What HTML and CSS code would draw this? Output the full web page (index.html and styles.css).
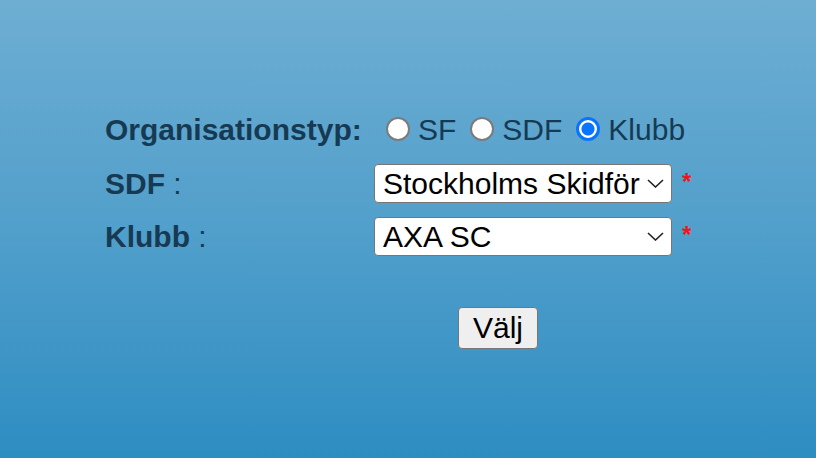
FILE: index.html
```html
<!DOCTYPE html>
<html lang="sv">
<head>
<meta charset="utf-8">
<title>Välj organisation</title>
<link rel="stylesheet" href="styles.css">
</head>
<body>
<form class="page">
  <div class="form-grid">
    <div class="label row-org"><b>Organisationstyp:</b></div>
    <div class="radios">
      <label class="opt"><input type="radio" name="typ" class="radio"><span>SF</span></label>
      <label class="opt"><input type="radio" name="typ" class="radio"><span>SDF</span></label>
      <label class="opt"><input type="radio" name="typ" class="radio" checked><span>Klubb</span></label>
    </div>

    <div class="label"><b>SDF</b> :</div>
    <div class="field">
      <div class="select-wrap">
        <select class="select"><option>Stockholms Skidförbund</option></select>
        <svg class="chev" width="17" height="9" viewBox="0 0 17 9"><path d="M1 1 L8.5 8 L16 1" fill="none" stroke="#222" stroke-width="1.6"/></svg>
      </div>
      <span class="req">*</span>
    </div>

    <div class="label"><b>Klubb</b> :</div>
    <div class="field">
      <div class="select-wrap">
        <select class="select"><option>AXA SC</option></select>
        <svg class="chev" width="17" height="9" viewBox="0 0 17 9"><path d="M1 1 L8.5 8 L16 1" fill="none" stroke="#222" stroke-width="1.6"/></svg>
      </div>
      <span class="req">*</span>
    </div>
  </div>
  <div class="actions">
    <button type="button" class="btn">Välj</button>
  </div>
</form>
</body>
</html>
```

FILE: styles.css
```css
html, body {
  margin: 0;
  height: 100%;
}
body {
  background: linear-gradient(to bottom, #6eaed3 0%, #519fcb 50%, #2e8dc2 100%);
  font-family: "Liberation Sans", Arial, sans-serif;
  color: #173a53;
  overflow: hidden;
}
.page {
  padding: 110px 0 0 105px;
}
.form-grid {
  display: grid;
  grid-template-columns: 269px auto;
  grid-template-rows: 40px 39px 39px;
  row-gap: 14px;
  align-items: center;
}
.label {
  font-size: 30px;
  line-height: 34px;
  white-space: nowrap;
}
.radios {
  display: flex;
  align-items: center;
  gap: 14px;
  padding-left: 12px;
  font-size: 30px;
}
.opt {
  display: flex;
  align-items: center;
  gap: 8px;
  line-height: 34px;
}
.radio {
  appearance: none;
  -webkit-appearance: none;
  margin: 0;
  width: 24px;
  height: 24px;
  border-radius: 50%;
  border: 2px solid #7b7b7b;
  background: #fff;
  box-sizing: border-box;
  position: relative;
  top: -1px;
}
.radio:checked {
  border: 3.5px solid #0a74fe;
  background: radial-gradient(circle, #0a74fe 0 6px, #fff 7px);
}
.field {
  display: flex;
  align-items: flex-start;
}
.select-wrap {
  position: relative;
  width: 298px;
  height: 39px;
}
.select {
  appearance: none;
  -webkit-appearance: none;
  width: 298px;
  height: 39px;
  margin: 0;
  box-sizing: border-box;
  border: 1.5px solid #767676;
  border-radius: 4px;
  background: #fff;
  color: #000;
  font-family: "Liberation Sans", Arial, sans-serif;
  font-size: 30px;
  padding: 0 31px 0 8px;
  line-height: 36px;
  text-overflow: clip;
  outline: none;
}
.chev {
  position: absolute;
  right: 8px;
  top: 15px;
  pointer-events: none;
}
.req {
  color: #f2141b;
  font-weight: bold;
  font-size: 24px;
  line-height: 24px;
  margin-left: 10px;
  margin-top: 6px;
}
.actions {
  padding: 51px 0 0 353px;
}
.btn {
  width: 80px;
  height: 42px;
  box-sizing: border-box;
  background: #efefef;
  border: 1.5px solid #767676;
  border-radius: 4px;
  color: #000;
  font-family: "Liberation Sans", Arial, sans-serif;
  font-size: 30px;
  padding: 0;
  line-height: 38px;
  margin: 0;
}
```
